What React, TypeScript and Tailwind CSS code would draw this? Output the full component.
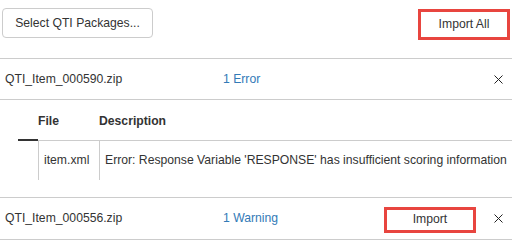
import React from "react";

const font = "font-['Liberation_Sans',Arial,sans-serif]";

function CloseIcon() {
  return (
    <svg width="9" height="9" viewBox="0 0 9 9" className="shrink-0">
      <path d="M0.5 0.5L8.5 8.5M8.5 0.5L0.5 8.5" stroke="#222" strokeWidth="1" fill="none" />
    </svg>
  );
}

export default function App() {
  return (
    <div className={`w-[512px] h-[240px] overflow-hidden bg-white text-[12.2px] text-[#333] ${font}`}>
      <div className="flex h-[59px] items-start justify-between border-b border-[#ccc] pl-[2px] pr-[2px]">
        <button className="mt-[8px] h-[30px] w-[151px] rounded-[4px] border border-[#ccc] bg-white text-[12.2px] text-[#333]">
          Select QTI Packages...
        </button>
        <button className="mt-[9px] h-[31px] w-[92px] border-[3px] border-[#e8453f] bg-white text-[12.2px] text-[#333]">
          Import All
        </button>
      </div>

      <div className="flex h-[41px] items-center border-b border-[#ccc] pl-[5px] pr-[9px]">
        <span className="w-[218px]">QTI_Item_000590.zip</span>
        <span className="flex-1 text-[#337ab7]">1 Error</span>
        <CloseIcon />
      </div>

      <div className="h-[97px] pl-[18px]">
        <div className="grid h-[41px] grid-cols-[20px_61px_1fr] font-bold">
          <div className="border-b-2 border-[#333]" />
          <div className="flex items-end border-b border-[#ccc] pb-[10px]">File</div>
          <div className="flex items-end border-b border-[#ccc] pb-[10px]">Description</div>
        </div>
        <div className="grid h-[39px] grid-cols-[20px_61px_1fr]">
          <div />
          <div className="flex items-center border-l border-[#ccc] pl-[5px]">item.xml</div>
          <div className="flex items-center whitespace-nowrap border-l border-[#ccc] pl-[5px]">
            Error: Response Variable 'RESPONSE' has insufficient scoring information
          </div>
        </div>
      </div>

      <div className="flex h-[43px] items-center border-y border-[#ccc] pl-[5px] pr-[9px]">
        <span className="w-[218px]">QTI_Item_000556.zip</span>
        <span className="flex-1 text-[#337ab7]">1 Warning</span>
        <button className="mr-[18px] mt-[2px] h-[26px] w-[92px] border-[3px] border-[#e8453f] bg-white text-[12.2px] text-[#333]">
          Import
        </button>
        <CloseIcon />
      </div>
    </div>
  );
}
